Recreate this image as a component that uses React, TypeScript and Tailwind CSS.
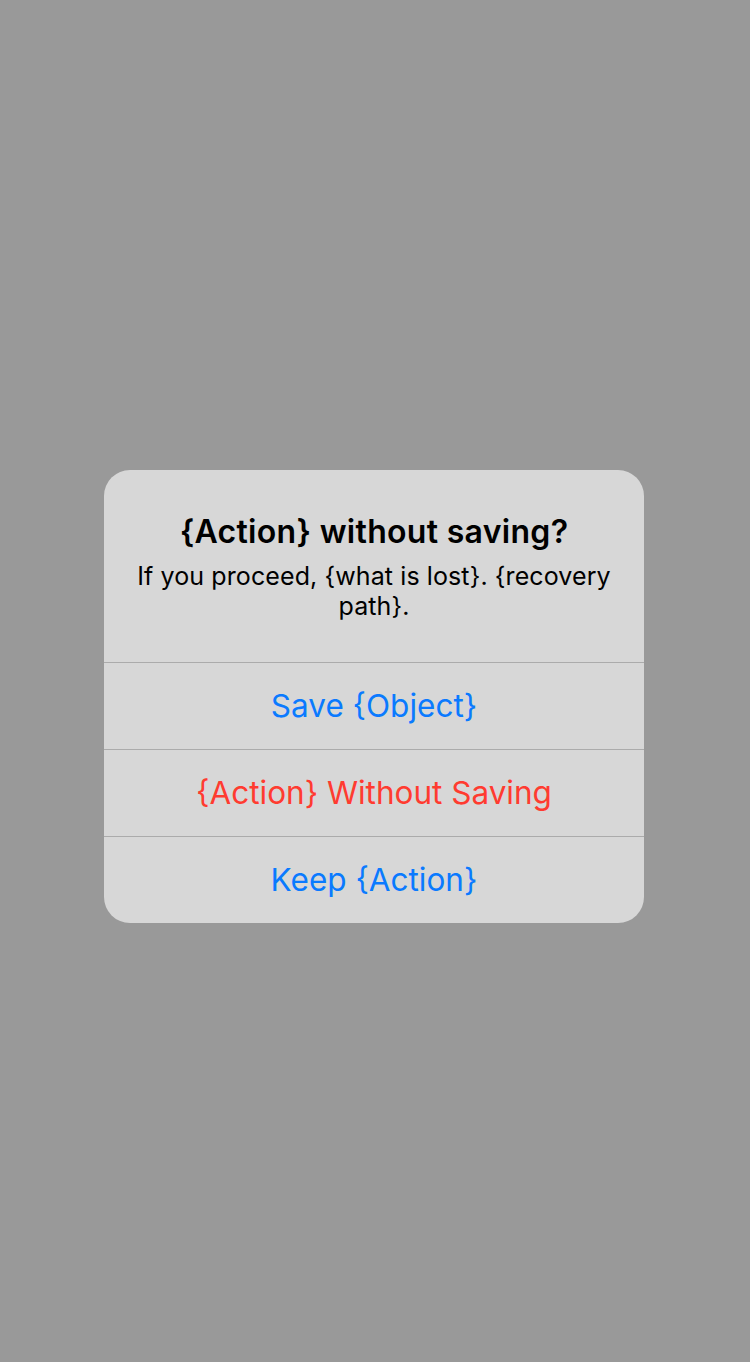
const actions = [
  { label: 'Save {Object}', tone: 'text-[#0a7aff]' },
  { label: '{Action} Without Saving', tone: 'text-[#ff3b30]' },
  { label: 'Keep {Action}', tone: 'text-[#0a7aff]' },
];

export default function App() {
  return (
    <div className="w-full h-[1362px] bg-[#999999] flex items-center justify-center font-['Inter',_sans-serif]">
      <div className="w-[540px] mt-[30px] -ml-[2px] rounded-[26px] bg-[#d7d7d7] overflow-hidden">
        {/* Alert header */}
        <div className="pt-[44px] pb-[41px] px-6 text-center text-black">
          <h2 className="text-[32px] leading-[36px] font-semibold tracking-[0.3px]">
            {'{Action}'} without saving?
          </h2>
          <p className="mt-[11px] text-[25px] leading-[30px] tracking-[0.1px]">
            If you proceed, {'{what is lost}'}. {'{recovery path}'}.
          </p>
        </div>

        {/* Stacked actions */}
        {actions.map((a) => (
          <button
            key={a.label}
            className={`w-full h-[87px] border-t border-[#ababab] flex items-center justify-center text-[31.5px] ${a.tone}`}
          >
            {a.label}
          </button>
        ))}
      </div>
    </div>
  );
}
